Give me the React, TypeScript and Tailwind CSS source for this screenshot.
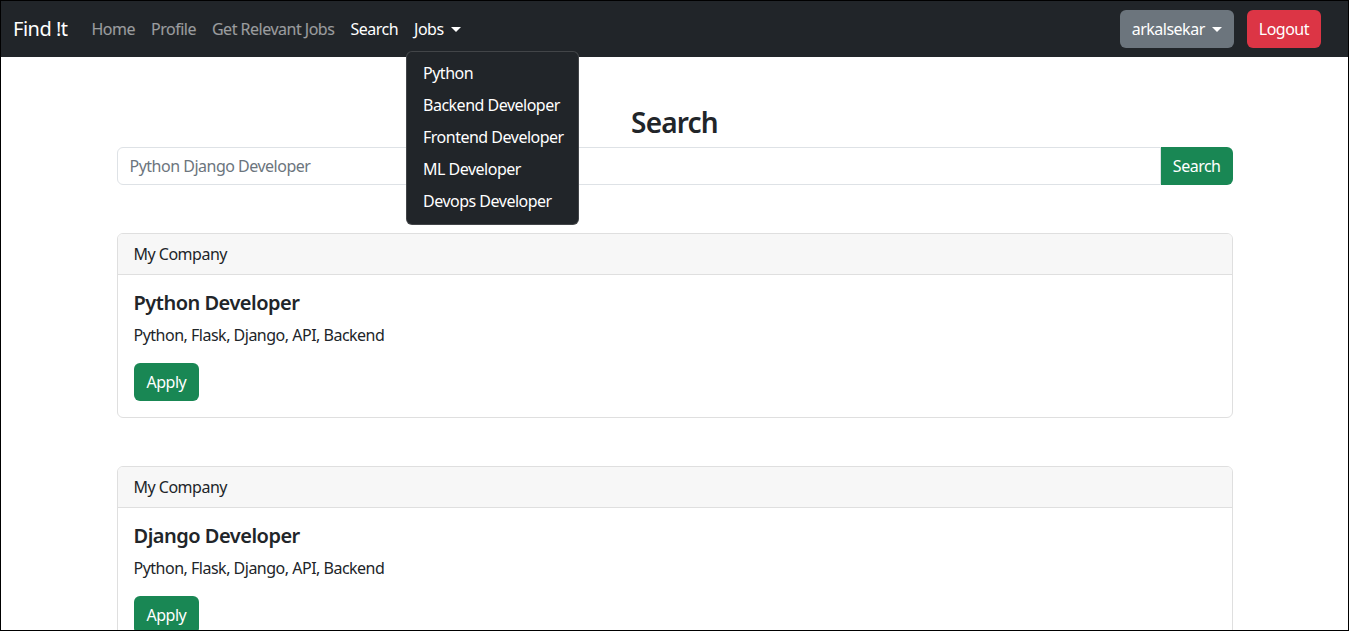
import React, { useState } from 'react';

const jobs = [
  { company: 'My Company', title: 'Python Developer', skills: 'Python, Flask, Django, API, Backend' },
  { company: 'My Company', title: 'Django Developer', skills: 'Python, Flask, Django, API, Backend' },
];

const jobCategories = ['Python', 'Backend Developer', 'Frontend Developer', 'ML Developer', 'Devops Developer'];

const Caret = () => (
  <span className="ml-[7px] inline-block h-0 w-0 border-x-[5px] border-t-[5px] border-x-transparent border-t-current align-[3px]" />
);

const Navbar: React.FC = () => {
  const [jobsOpen] = useState(true);

  return (
    <nav className="flex h-14 items-center bg-[#212529] pl-3 pr-[27px]">
      <a className="mr-4 text-[20px] leading-[30px] text-white">Find !t</a>
      <ul className="flex items-center text-[16px] leading-6">
        <li><a className="block px-2 py-2 text-white/55">Home</a></li>
        <li><a className="block px-2 py-2 text-white/55">Profile</a></li>
        <li><a className="block px-2 py-2 text-white/55">Get Relevant Jobs</a></li>
        <li><a className="block px-2 py-2 text-white">Search</a></li>
        <li className="relative">
          <a className="flex items-center px-2 py-2 text-white">
            Jobs <Caret />
          </a>
          {jobsOpen && (
            <ul className="absolute left-0 top-[42px] z-10 w-[173px] rounded-md border border-white/15 bg-[#212529] pb-[7px] pt-[5px]">
              {jobCategories.map((c) => (
                <li key={c}>
                  <a className="block whitespace-nowrap px-4 py-1 text-white">{c}</a>
                </li>
              ))}
            </ul>
          )}
        </li>
      </ul>
      <div className="ml-auto flex items-center gap-[13px]">
        <button className="flex h-[38px] items-center rounded-md bg-[#6c757d] px-3 text-[16px] text-white">
          arkalsekar <Caret />
        </button>
        <button className="h-[38px] rounded-md bg-[#dc3545] px-3 text-[16px] text-white">Logout</button>
      </div>
    </nav>
  );
};

const JobCard: React.FC<{ company: string; title: string; skills: string }> = ({ company, title, skills }) => (
  <div className="mt-12 overflow-hidden rounded-md border border-[#dfdfdf]">
    <div className="border-b border-[#dfdfdf] bg-[#f7f7f7] px-4 py-2 text-[16px] leading-6 text-[#212529]">{company}</div>
    <div className="p-4">
      <h5 className="mb-2 text-[20px] font-semibold leading-6 text-[#212529]">{title}</h5>
      <p className="mb-4 text-[16px] leading-6 text-[#212529]">{skills}</p>
      <button className="h-[38px] rounded-md bg-[#198754] px-[13px] text-[16px] text-white">Apply</button>
    </div>
  </div>
);

export default function App() {
  return (
    <div className="h-[631px] overflow-hidden border border-black bg-white font-['Noto_Sans',sans-serif] tracking-[-0.5px]">
      <Navbar />
      <div className="mx-auto w-[1140px] px-3 pt-12">
        <h3 className="mb-2 text-center text-[28px] font-semibold leading-[34px] tracking-[-0.8px] text-[#212529]">Search</h3>
        <div className="flex">
          <input
            className="h-[38px] flex-1 rounded-l-md border border-[#dee2e6] px-3 text-[16px] tracking-[-0.5px] outline-none placeholder:text-[#6c757d]"
            placeholder="Python Django Developer"
          />
          <button className="h-[38px] rounded-r-md bg-[#198754] px-3 text-[16px] text-white">Search</button>
        </div>
        {jobs.map((j) => (
          <JobCard key={j.title} {...j} />
        ))}
      </div>
    </div>
  );
}
